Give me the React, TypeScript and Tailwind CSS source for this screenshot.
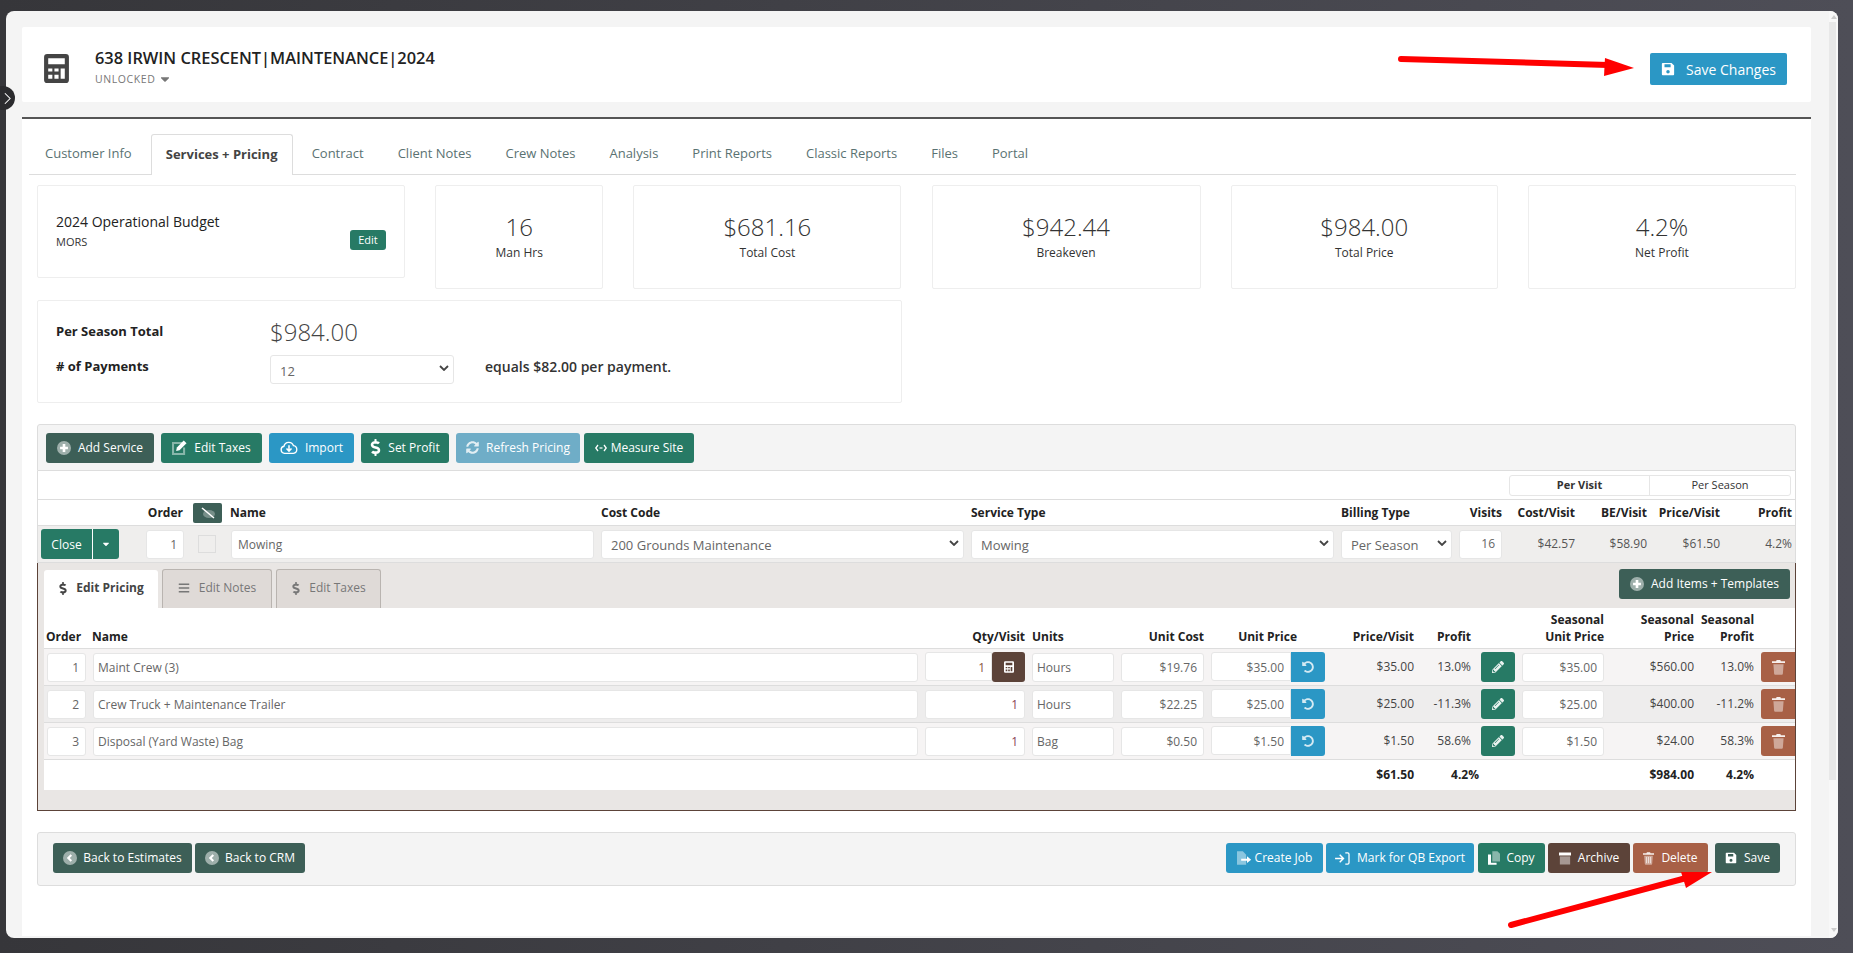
import { ReactNode } from 'react';
import { FaCaretDown, FaDollarSign, FaPencilAlt, FaUndoAlt, FaBars, FaSyncAlt } from 'react-icons/fa';

const font = "font-['Open_Sans',sans-serif]";
const teal = 'bg-[#277a65]';
const slate = 'bg-[#3d5f57]';
const blue = 'bg-[#2b97c5]';
const brown = 'bg-[#5c4339]';
const rust = 'bg-[#a86046]';

function PlusCircle() {
  return (
    <svg viewBox="0 0 16 16" className="w-[14px] h-[14px]">
      <circle cx="8" cy="8" r="8" fill="#fff" opacity="0.5" />
      <path d="M8 3.5v9M3.5 8h9" stroke="#fff" strokeWidth="3" />
    </svg>
  );
}

function BackCircle() {
  return (
    <svg viewBox="0 0 16 16" className="w-[14px] h-[14px]">
      <circle cx="8" cy="8" r="8" fill="#fff" opacity="0.5" />
      <path d="M9.5 4.5L6 8l3.5 3.5" stroke="#fff" strokeWidth="2.4" fill="none" />
    </svg>
  );
}

function Floppy({ className }: { className: string }) {
  return (
    <svg viewBox="0 0 16 16" className={className}>
      <path
        fill="currentColor"
        fillRule="evenodd"
        d="M2 1h10l3 3v10a1 1 0 0 1-1 1H2a1 1 0 0 1-1-1V2a1 1 0 0 1 1-1zm2 1.5V6h7V2.5H4zM8 9a2 2 0 1 0 0 4 2 2 0 0 0 0-4z"
      />
    </svg>
  );
}

function Calculator({ className }: { className: string }) {
  return (
    <svg viewBox="0 0 24 28" className={className}>
      <path
        fill="currentColor"
        fillRule="evenodd"
        d="M3 0h18a3 3 0 0 1 3 3v22a3 3 0 0 1-3 3H3a3 3 0 0 1-3-3V3a3 3 0 0 1 3-3zm1 4v6h16V4H4zm0 10v3h4v-3H4zm6 0v3h4v-3h-4zm6 0v10h4V14h-4zM4 20v4h4v-4H4zm6 0v4h4v-4h-4z"
      />
    </svg>
  );
}

function Trash({ className, striped }: { className: string; striped?: boolean }) {
  return (
    <svg viewBox="0 0 14 16" className={className}>
      <path fill="#fff" opacity="0.45" d="M1.5 4.5h11l-.8 10.2a1.2 1.2 0 0 1-1.2 1.1H3.5a1.2 1.2 0 0 1-1.2-1.1z" />
      <path fill="#fff" opacity="0.9" d="M5 0h4l.6 1.2H14v2H0v-2h4.4z" />
      {striped && <path d="M4.5 6v8M7 6v8M9.5 6v8" stroke="#fff" strokeWidth="1" opacity="0.8" />}
    </svg>
  );
}

function Archive() {
  return (
    <svg viewBox="0 0 14 14" className="w-[12px] h-[13px]">
      <path fill="#fff" d="M0 0h14v3.5H0z" />
      <path fill="#fff" opacity="0.45" d="M1 4.5h12V14H1z" />
    </svg>
  );
}

function Copy() {
  return (
    <svg viewBox="0 0 14 16" className="w-[12px] h-[14px]">
      <path fill="#fff" opacity="0.45" d="M5 0h6l3 3v9H5z" />
      <path fill="#fff" d="M0 4h3.5v9.5H10V16H0z" />
    </svg>
  );
}

function FileArrow() {
  return (
    <svg viewBox="0 0 18 16" className="w-[15px] h-[14px]">
      <path fill="#fff" opacity="0.45" d="M0 0h7l4 4v12H0z" />
      <path fill="#fff" d="M5 8.8h7V6l5 4-5 4v-2.8H5z" />
    </svg>
  );
}

function SignIn() {
  return (
    <svg viewBox="0 0 16 14" className="w-[15px] h-[13px]" fill="none" stroke="#fff">
      <path d="M0 7h8M5 3l4 4-4 4" strokeWidth="1.6" />
      <path d="M11 1h2.5a1.5 1.5 0 0 1 1.5 1.5v9a1.5 1.5 0 0 1-1.5 1.5H11" strokeWidth="1.4" />
    </svg>
  );
}

function EditSquare() {
  return (
    <svg viewBox="0 0 16 16" className="w-[15px] h-[15px]">
      <path fill="#fff" opacity="0.45" fillRule="evenodd" d="M0 2h11v2.2H2.2v9.6h9.6V8H14v8H0z" />
      <path fill="#fff" d="M12.5 0.5L15.5 3.5 8 11l-3.6.8L5.2 8z" />
    </svg>
  );
}

function CloudDown() {
  return (
    <svg viewBox="0 0 20 16" className="w-[18px] h-[15px]" fill="none" stroke="#fff">
      <path d="M5 14.5a4 4 0 0 1-.6-7.9 5.5 5.5 0 0 1 10.6-.6 4.3 4.3 0 0 1 0 8.5z" strokeWidth="1.5" />
      <path d="M10 5.5v6M7.2 9L10 12l2.8-3" strokeWidth="1.7" />
    </svg>
  );
}

function Measure() {
  return (
    <svg viewBox="0 0 12 8" className="w-[12px] h-[8px]" fill="none" stroke="#fff">
      <path d="M3 1L.8 4 3 7M9 1l2.2 3L9 7" strokeWidth="1.3" />
      <path d="M4.5 4h3" strokeWidth="1.2" />
    </svg>
  );
}

function EyeSlash() {
  return (
    <svg viewBox="0 0 16 12" className="w-[16px] h-[12px]">
      <ellipse cx="9" cy="7" rx="6" ry="4" fill="#fff" opacity="0.3" />
      <path d="M2 1l12 10" stroke="#fff" strokeWidth="1.5" />
    </svg>
  );
}

function Btn({ color, className = '', children }: { color: string; className?: string; children: ReactNode }) {
  return (
    <button className={`${color} ${className} h-[30px] rounded-[3px] text-white text-[12px] flex items-center justify-center gap-[7px]`}>
      {children}
    </button>
  );
}

function Field({ value, right, className = '', text = 'text-[#666]' }: { value: string; right?: boolean; className?: string; text?: string }) {
  return (
    <div className={`h-[29px] bg-white border border-[#e6e6e6] rounded-[3px] px-[6px] pt-[2px] flex items-center text-[12px] ${text} ${right ? 'justify-end' : ''} ${className}`}>
      {value}
    </div>
  );
}

function Chevron() {
  return (
    <svg viewBox="0 0 10 6" className="w-[10px] h-[6px]">
      <path d="M1 1l4 4 4-4" stroke="#444" strokeWidth="1.8" fill="none" />
    </svg>
  );
}

function Select({ value }: { value: string }) {
  return (
    <div className="h-[29px] bg-white border border-[#e6e6e6] rounded-[3px] pl-[9px] pr-[4px] flex items-center justify-between text-[13px] text-[#666]">
      <span className="pt-[4px]">{value}</span>
      <span className="pb-[3px]">
        <Chevron />
      </span>
    </div>
  );
}

function Stat({ value, label, className }: { value: string; label: string; className: string }) {
  return (
    <div className={`${className} h-[104px] border border-[#eee] rounded-[2px] flex flex-col items-center pt-[24px]`}>
      <div className="text-[24px] leading-[34px] font-light text-[#333]">{value}</div>
      <div className="text-[12px] leading-[16px] mt-[1px] text-[#333]">{label}</div>
    </div>
  );
}

const serviceCols = 'grid grid-cols-[78px_58px_25px_371px_363px_363px_111px_43px_66px_65px_66px_65px] gap-x-[7px] pl-[3px]';
const itemCols = 'grid grid-cols-[39px_825px_100px_82px_83px_114px_82px_50px_37px_82px_83px_53px_34px] gap-x-[7px] pl-[3px]';

const items = [
  { order: '1', name: 'Maint Crew (3)', qty: '1', units: 'Hours', cost: '$19.76', price: '$35.00', visit: '$35.00', profit: '13.0%', unit: '$35.00', season: '$560.00', seasonProfit: '13.0%', bg: 'bg-[#f6f4f4]', calc: true },
  { order: '2', name: 'Crew Truck + Maintenance Trailer', qty: '1', units: 'Hours', cost: '$22.25', price: '$25.00', visit: '$25.00', profit: '-11.3%', unit: '$25.00', season: '$400.00', seasonProfit: '-11.2%', bg: 'bg-[#eeeded]', calc: false },
  { order: '3', name: 'Disposal (Yard Waste) Bag', qty: '1', units: 'Bag', cost: '$0.50', price: '$1.50', visit: '$1.50', profit: '58.6%', unit: '$1.50', season: '$24.00', seasonProfit: '58.3%', bg: 'bg-[#f6f4f4]', calc: false },
];

function ItemRow({ item }: { item: (typeof items)[number] }) {
  return (
    <div className={`${itemCols} ${item.bg} h-[37px] items-center border-b border-[#ddd] text-[12px] text-[#444]`}>
      <Field value={item.order} right />
      <Field value={item.name} className="!pl-[4px]" />
      {item.calc ? (
        <div className="flex">
          <Field value={item.qty} right className="w-[67px] rounded-r-none" text="text-[#8a5a44]" />
          <div className={`${brown} w-[33px] h-[30px] rounded-[3px] flex items-center justify-center text-white`}>
            <Calculator className="w-[10px] h-[12px]" />
          </div>
        </div>
      ) : (
        <Field value={item.qty} right text="text-[#8a3f55]" />
      )}
      <Field value={item.units} className="!pl-[4px]" />
      <Field value={item.cost} right />
      <div className="flex">
        <Field value={item.price} right className="w-[80px] rounded-r-none" />
        <div className={`${blue} w-[34px] h-[30px] rounded-r-[3px] flex items-center justify-center text-white`}>
          <FaUndoAlt className="w-[12px] h-[12px] opacity-80" />
        </div>
      </div>
      <div className="text-right">{item.visit}</div>
      <div className="text-right">{item.profit}</div>
      <div className={`${teal} w-[34px] h-[30px] rounded-[3px] justify-self-end flex items-center justify-center text-white`}>
        <FaPencilAlt className="w-[12px] h-[12px] opacity-90" />
      </div>
      <Field value={item.unit} right />
      <div className="text-right">{item.season}</div>
      <div className="text-right">{item.seasonProfit}</div>
      <div className={`${rust} w-[34px] h-[30px] rounded-l-[3px] flex items-center justify-center`}>
        <Trash className="w-[13px] h-[15px]" />
      </div>
    </div>
  );
}

function Arrows() {
  return (
    <svg viewBox="0 0 1853 953" className="absolute inset-0 w-[1853px] h-[953px] pointer-events-none">
      <path d="M1401 59L1608 65" stroke="#ff0000" strokeWidth="6" strokeLinecap="round" fill="none" />
      <path d="M1605 58L1634 68L1604 76z" fill="#ff0000" />
      <path d="M1511 925L1690 877" stroke="#ff0000" strokeWidth="6" strokeLinecap="round" fill="none" />
      <path d="M1681 872L1712 872L1686 888z" fill="#ff0000" />
    </svg>
  );
}

export default function App() {
  return (
    <div className={`${font} relative w-[1853px] h-[953px] overflow-hidden bg-gradient-to-r from-[#36363a] to-[#4e4e57] pt-[11px] pl-[6px]`}>
      <div className="w-[1832px] h-[927px] rounded-[8px] overflow-hidden flex bg-[#f4f4f4]">
        <div className="w-[1823px] pl-[16px] pr-[18px] pt-[16px]">
          {/* page title */}
          <div className="h-[75px] bg-white rounded-[2px] flex items-center pl-[22px] pr-[24px]">
            <Calculator className="w-[25px] h-[29px] mt-[8px] text-[#444]" />
            <div className="ml-[26px] mt-[3px] flex-1">
              <div className="text-[16.4px] leading-[22px] font-semibold text-[#222]">638 IRWIN CRESCENT|MAINTENANCE|2024</div>
              <div className="flex items-center gap-[2px] mt-[4px] h-[12px] text-[10.5px] leading-[12px] tracking-[0.6px] text-[#777]">
                UNLOCKED <FaCaretDown className="w-[14px] h-[14px]" />
              </div>
            </div>
            <button className={`${blue} w-[137px] h-[32px] mt-[9px] rounded-[2px] text-white text-[14px] flex items-center justify-center gap-[11px]`}>
              <Floppy className="w-[14px] h-[14px]" />
              Save Changes
            </button>
          </div>

          <div className="mt-[15px] h-[819px] bg-white border-t-2 border-[#555] px-[15px] pt-[15px]">
            {/* tabs */}
            <div className="-ml-[8px] flex h-[41px] border-b border-[#ddd] text-[13px] text-[#5a7272]">
              <div className="pl-[16px] pr-[16px] mr-[3px] flex items-center">Customer Info</div>
              <div className="w-[142px] mr-[4px] -mb-px bg-white border border-b-0 border-[#ddd] rounded-t-[3px] flex items-center justify-center font-bold text-[#444]">Services + Pricing</div>
              {['Contract', 'Client Notes', 'Crew Notes', 'Analysis', 'Print Reports', 'Classic Reports', 'Files', 'Portal'].map((t) => (
                <div key={t} className="px-[15px] mr-[4px] flex items-center">{t}</div>
              ))}
            </div>

            {/* summary cards */}
            <div className="mt-[10px] flex justify-between items-start">
              <div className="w-[368px] h-[93px] border border-[#eee] rounded-[2px] pl-[18px] pr-[18px] pt-[26px]">
                <div className="text-[14px] leading-[20px] text-[#222] font-medium">2024 Operational Budget</div>
                <div className="flex items-start justify-between">
                  <div className="text-[11px] leading-[16px] mt-[2px] text-[#333]">MORS</div>
                  <button className={`${teal} w-[36px] h-[20px] rounded-[3px] text-white text-[11px] -mt-[2px]`}>Edit</button>
                </div>
              </div>
              <Stat className="w-[168px]" value="16" label="Man Hrs" />
              <Stat className="w-[268px]" value="$681.16" label="Total Cost" />
              <Stat className="w-[269px]" value="$942.44" label="Breakeven" />
              <Stat className="w-[267px]" value="$984.00" label="Total Price" />
              <Stat className="w-[268px]" value="4.2%" label="Net Profit" />
            </div>

            <div className="mt-[11px] w-[865px] h-[103px] border border-[#eee] rounded-[2px] pl-[18px] pt-[14px]">
              <div className="flex items-center h-[34px]">
                <div className="w-[214px] text-[13px] font-bold text-[#222]">Per Season Total</div>
                <div className="text-[24px] font-light text-[#444]">$984.00</div>
              </div>
              <div className="flex items-start mt-[6px]">
                <div className="w-[214px] text-[13px] font-bold text-[#222] pt-[2px]">
                  # of Payments
                </div>
                <div className="w-[184px]">
                  <Select value="12" />
                </div>
                <div className="ml-[31px] text-[14px] font-semibold text-[#333] pt-[1px]">equals $82.00 per payment.</div>
              </div>
            </div>

            {/* services panel */}
            <div className="mt-[21px] w-[1759px]">
              <div className="h-[47px] bg-[#f4f4f4] border border-[#ddd] rounded-t-[3px] flex items-center pl-[8px] gap-[7px]">
                <Btn color={slate} className="w-[108px]"><PlusCircle />Add Service</Btn>
                <Btn color={teal} className="w-[101px]"><EditSquare />Edit Taxes</Btn>
                <Btn color={blue} className="w-[85px]"><CloudDown />Import</Btn>
                <Btn color={teal} className="w-[88px]"><FaDollarSign className="w-[11px] h-[17px]" />Set Profit</Btn>
                <Btn color="bg-[#6fadc7]" className="w-[124px]"><FaSyncAlt className="w-[13px] h-[13px] opacity-80" />Refresh Pricing</Btn>
                <Btn color={teal} className="w-[110px] -ml-[3px] !gap-[4px]"><Measure />Measure Site</Btn>
              </div>

              <div className="h-[29px] bg-white border-x border-b border-[#ddd] flex justify-end items-center pr-[4px]">
                <div className="w-[282px] h-[21px] border border-[#e6e6e6] rounded-[3px] grid grid-cols-2 text-[11px] text-[#333]">
                  <div className="flex items-center justify-center font-bold border-r border-[#e6e6e6]">Per Visit</div>
                  <div className="flex items-center justify-center">Per Season</div>
                </div>
              </div>

              <div className={`${serviceCols} h-[26px] items-center bg-white border-x border-b border-[#ddd] text-[12px] font-bold text-[#222]`}>
                <div />
                <div className="text-right pr-[1px]">Order</div>
                <div className={`${slate} ml-[2px] w-[29px] h-[20px] rounded-[2px] flex items-center justify-center`}>
                  <EyeSlash />
                </div>
                <div className="pl-[7px]">Name</div>
                <div>Cost Code</div>
                <div>Service Type</div>
                <div>Billing Type</div>
                <div className="text-right">Visits</div>
                <div className="text-right">Cost/Visit</div>
                <div className="text-right">BE/Visit</div>
                <div className="text-right">Price/Visit</div>
                <div className="text-right">Profit</div>
              </div>

              <div className={`${serviceCols} h-[37px] items-center bg-[#efeeed] border-x border-b border-[#ddd] text-[12px] text-[#555]`}>
                <div className={`${teal} h-[30px] rounded-[3px] flex text-white`}>
                  <div className="w-[52px] flex items-center justify-center border-r border-white pt-[1px]">Close</div>
                  <div className="flex-1 flex items-center justify-center"><FaCaretDown className="w-[10px] h-[10px]" /></div>
                </div>
                <Field value="1" right className="ml-[20px]" />
                <div className="ml-[7px] w-[18px] h-[18px] bg-[#efeeed] border border-[#ddd]" />
                <Field value="Mowing" className="ml-[8px]" />
                <Select value="200 Grounds Maintenance" />
                <Select value="Mowing" />
                <Select value="Per Season" />
                <Field value="16" right className="!pt-0" />
                <div className="text-right">$42.57</div>
                <div className="text-right">$58.90</div>
                <div className="text-right">$61.50</div>
                <div className="text-right">4.2%</div>
              </div>

              {/* line items */}
              <div className="h-[248px] bg-[#e9e6e4] border-x border-b border-[#5c4339]">
                <div className="h-[45px] flex justify-between pl-[6px] pr-[5px]">
                  <div className="flex items-end gap-[4px] text-[12px]">
                    <div className="w-[114px] h-[38px] pb-[2px] bg-white rounded-t-[3px] flex items-center justify-center gap-[8px] font-bold text-[#444]">
                      <FaDollarSign className="w-[10px] h-[13px]" />Edit Pricing
                    </div>
                    <div className="w-[110px] h-[39px] pb-[2px] bg-[#dfdad7] border border-b-0 border-[#b9b4b0] rounded-t-[3px] flex items-center justify-center gap-[9px] text-[#777]">
                      <FaBars className="w-[12px] h-[12px]" />Edit Notes
                    </div>
                    <div className="w-[105px] h-[39px] pb-[2px] bg-[#dfdad7] border border-b-0 border-[#b9b4b0] rounded-t-[3px] flex items-center justify-center gap-[8px] text-[#777]">
                      <FaDollarSign className="w-[10px] h-[13px]" />Edit Taxes
                    </div>
                  </div>
                  <Btn color={slate} className="w-[171px] mt-[6px]"><PlusCircle />Add Items + Templates</Btn>
                </div>

                <div className="ml-[6px] h-[182px] bg-white">
                  <div className={`${itemCols} h-[41px] items-end pb-[3px] border-b border-[#ddd] text-[12px] leading-[17px] font-bold text-[#222]`}>
                    <div className="-ml-[1px]">Order</div>
                    <div className="-ml-[1px]">Name</div>
                    <div className="text-right">Qty/Visit</div>
                    <div>Units</div>
                    <div className="text-right">Unit Cost</div>
                    <div className="text-right pr-[28px]">Unit Price</div>
                    <div className="text-right">Price/Visit</div>
                    <div className="text-right">Profit</div>
                    <div />
                    <div className="text-right">Seasonal<br />Unit Price</div>
                    <div className="text-right">Seasonal<br />Price</div>
                    <div className="text-right">Seasonal<br />Profit</div>
                    <div />
                  </div>
                  {items.map((item) => (
                    <ItemRow key={item.order} item={item} />
                  ))}
                  <div className={`${itemCols} h-[30px] items-center text-[12px] font-bold text-[#222]`}>
                    <div className="col-start-7 text-right">$61.50</div>
                    <div className="text-right -mr-[8px]">4.2%</div>
                    <div className="col-start-11 text-right">$984.00</div>
                    <div className="text-right">4.2%</div>
                  </div>
                </div>
              </div>
            </div>

            {/* footer actions */}
            <div className="mt-[21px] w-[1759px] h-[54px] bg-[#f4f4f4] border border-[#ddd] rounded-[3px] flex items-center justify-between pl-[15px] pr-[15px] pb-[2px]">
              <div className="flex gap-[3px]">
                <Btn color={slate} className="w-[139px] !gap-[6px]"><BackCircle />Back to Estimates</Btn>
                <Btn color={slate} className="w-[110px] !gap-[6px]"><BackCircle />Back to CRM</Btn>
              </div>
              <div className="flex gap-[3px]">
                <Btn color={blue} className="w-[97px] !gap-[3px]"><FileArrow />Create Job</Btn>
                <Btn color={blue} className="w-[148px]"><SignIn />Mark for QB Export</Btn>
                <Btn color={teal} className="w-[67px] ml-[1px] !gap-[6px]"><Copy />Copy</Btn>
                <Btn color={brown} className="w-[82px]"><Archive />Archive</Btn>
                <Btn color={rust} className="w-[75px]"><Trash className="w-[11px] h-[13px]" striped />Delete</Btn>
                <Btn color={slate} className="w-[65px] ml-[4px]"><Floppy className="w-[12px] h-[12px]" />Save</Btn>
              </div>
            </div>
          </div>
        </div>

        {/* scrollbar */}
        <div className="w-[9px] bg-[#f8f8f8] flex flex-col items-center pt-[4px]">
          <div className="w-0 h-0 border-x-[3px] border-x-transparent border-b-[4px] border-b-[#ccc]" />
          <div className="w-[7px] h-[758px] mt-[3px] bg-[#e8e8e8] -ml-[2px]" />
          <div className="w-0 h-0 mt-[148px] border-x-[3px] border-x-transparent border-t-[4px] border-t-[#ccc]" />
        </div>
      </div>

      {/* sidebar toggle */}
      <div className="absolute left-[-9px] top-[86px] w-[24px] h-[24px] rounded-full bg-[#2b2b2e] flex items-center justify-center pl-[8px]">
        <svg viewBox="0 0 8 14" className="w-[7px] h-[13px]">
          <path d="M1 1l6 6-6 6" stroke="#fff" strokeWidth="1.2" fill="none" />
        </svg>
      </div>
      <Arrows />
    </div>
  );
}
